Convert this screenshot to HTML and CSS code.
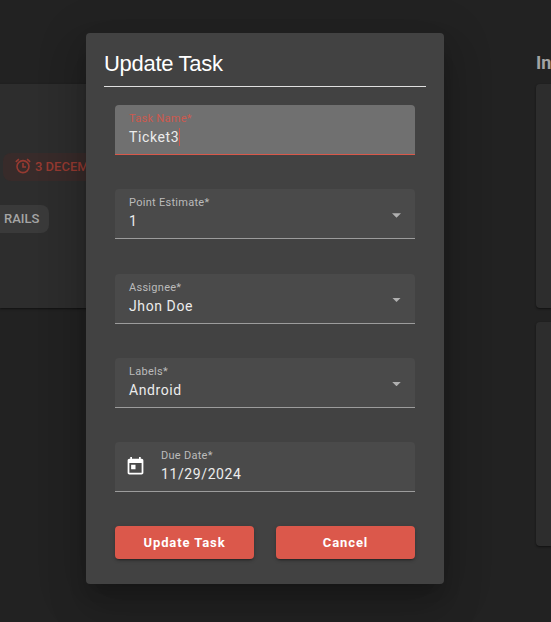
FILE: index.html
```html
<!DOCTYPE html>
<html lang="en">
<head>
<meta charset="utf-8">
<title>Update Task</title>
<link rel="stylesheet" href="styles.css">
</head>
<body>
<main class="board">
  <section class="column">
    <article class="task">
      <span class="due">
        <svg width="16" height="16" viewBox="0 0 16 16" fill="none" stroke="currentColor" stroke-width="1.6"><circle cx="8" cy="8.6" r="6"/><path d="M8 5v4h3M.8 3.8 3.9 1.1M15.2 3.8 12.1 1.1"/></svg>
        3 DECEMBER
      </span>
      <span class="tag">RAILS</span>
    </article>
  </section>
  <section class="column next">
    <h2>In</h2>
    <article class="task"></article>
    <article class="task"></article>
  </section>
</main>
<form class="dialog">
  <h1>Update Task</h1>
  <div class="fields">
    <div class="field active"><div class="text"><label>Task Name*</label><span class="value">Ticket3<i class="caret"></i></span></div></div>
    <div class="field"><div class="text"><label>Point Estimate*</label><span class="value">1</span></div><i class="arrow"></i></div>
    <div class="field"><div class="text"><label>Assignee*</label><span class="value">Jhon Doe</span></div><i class="arrow"></i></div>
    <div class="field"><div class="text"><label>Labels*</label><span class="value">Android</span></div><i class="arrow"></i></div>
    <div class="field date">
      <svg class="calendar" width="21" height="21" viewBox="0 0 24 24" fill="#fff"><path d="M19 3h-1V1h-2v2H8V1H6v2H5c-1.100 0-2 .9-2 2v14c0 1.100.9 2 2 2h14c1.100 0 2-.9 2-2V5c0-1.100-.9-2-2-2zm0 16H5V8h14v11zM7 10h5v5H7z"/></svg>
      <div class="text"><label>Due Date*</label><span class="value">11/29/2024</span></div>
    </div>
  </div>
  <div class="actions"><button type="button">Update Task</button><button type="button">Cancel</button></div>
</form>
</body>
</html>
```
FILE: styles.css
```css
* { box-sizing: border-box; }
body {
  margin: 0;
  height: 622px;
  overflow: hidden;
  background: #222;
  font-family: Roboto, sans-serif;
}
.board { display: flex; justify-content: space-between; height: 622px; overflow: hidden; }
.column { width: 400px; padding-top: 84px; }
.column.next { width: 15px; padding-top: 50px; }
.next h2 {
  margin: 0 0 8px;
  height: 26px;
  font-size: 18px;
  line-height: 26px;
  font-weight: 700;
  color: #a3a3a3;
}
.task {
  height: 224px;
  margin-bottom: 14px;
  border-radius: 4px 0 0 4px;
  background: #2d2d2d;
  box-shadow: 0 1px 2px #111;
}
.column:first-child .task { padding-top: 69px; border-radius: 0; }
.due {
  display: flex;
  align-items: center;
  gap: 4px;
  width: 150px;
  height: 28px;
  margin-left: 3px;
  padding-left: 12px;
  border-radius: 8px;
  background: #382b2a;
  color: #963a31;
  font-size: 13px;
  font-weight: 500;
  line-height: 26px;
}
.due svg { margin-bottom: 2px; }
.tag {
  display: block;
  width: 49px;
  height: 28px;
  margin-top: 24px;
  padding-left: 4px;
  border-radius: 0 8px 8px 0;
  background: #3a3a3a;
  color: #a5a5a5;
  font-size: 13px;
  font-weight: 500;
  line-height: 27px;
}
.dialog {
  position: absolute;
  left: 86px;
  top: 33px;
  width: 358px;
  height: 551px;
  padding: 18px;
  border-radius: 4px;
  background: #424242;
  box-shadow: 0 11px 15px -7px rgba(0,0,0,.2), 0 24px 38px 3px rgba(0,0,0,.14), 0 9px 46px 8px rgba(0,0,0,.12);
}
h1 {
  margin: 0;
  height: 36px;
  border-bottom: 1px solid #e0e0e0;
  color: #fff;
  font: 400 22px/26px "Liberation Sans", Arial, sans-serif;
  letter-spacing: -.3px;
}
.fields { display: flex; flex-direction: column; gap: 34.25px; margin: 18px 11px 0; }
.field {
  display: flex;
  justify-content: space-between;
  height: 50px;
  padding: 0 14px;
  border-bottom: 1px solid #9c9c9c;
  border-radius: 4px 4px 0 0;
  background: #4a4a4a;
}
.text { display: flex; flex-direction: column; padding-top: 7px; }
label {
  height: 13px;
  font-size: 11px;
  line-height: 13px;
  letter-spacing: .28px;
  color: #bbb;
}
.value {
  display: flex;
  align-items: center;
  height: 24px;
  font-size: 14px;
  letter-spacing: .6px;
  color: #ececec;
}
.active { background: #707070; border-color: #d9584a; }
.active label { color: #cd594e; }
.caret { width: 1px; height: 18px; background: #cd594e; }
.arrow {
  margin-top: 24px;
  width: 9px;
  height: 4.5px;
  background: #b0b0b0;
  clip-path: polygon(0 0, 100% 0, 50% 100%);
}
.date { justify-content: flex-start; padding-left: 10px; gap: 15px; }
.calendar { margin-top: 14px; }
.actions { display: flex; gap: 22px; margin: 34px 11px 0; }
button {
  flex: 1;
  height: 33px;
  padding: 0;
  border: 0;
  border-radius: 4px;
  background: #db584b;
  box-shadow: 0 3px 1px -2px rgba(0,0,0,.2), 0 2px 2px rgba(0,0,0,.14), 0 1px 5px rgba(0,0,0,.12);
  color: #fff;
  font: 700 13px Roboto, sans-serif;
  letter-spacing: .9px;
}
```
